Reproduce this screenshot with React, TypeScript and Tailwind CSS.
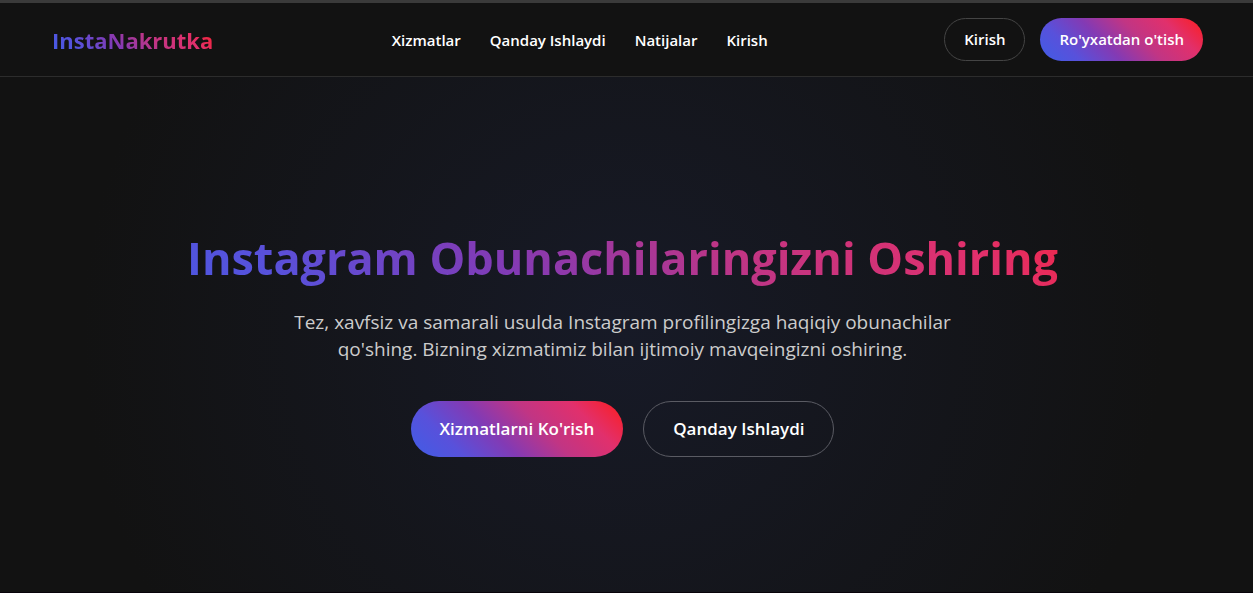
const NAV_LINKS = [
  { label: "Xizmatlar", href: "#xizmatlar" },
  { label: "Qanday Ishlaydi", href: "#qanday-ishlaydi" },
  { label: "Natijalar", href: "#natijalar" },
  { label: "Kirish", href: "#kirish" },
];

const GRADIENT =
  "bg-[linear-gradient(45deg,#405de6,#5851db,#833ab4,#c13584,#e1306c,#fd1d1d)]";

function Header() {
  return (
    <header className="flex items-center justify-between border-t-3 border-b border-t-[#3a3a3a] border-b-[#2c2c2c] bg-[#121212] px-[50px] py-[15px]">
      <a href="#" className={`${GRADIENT} bg-clip-text px-[2px] text-[22px] leading-8 font-bold text-transparent`}>
        InstaNakrutka
      </a>
      <nav className="flex gap-[29px] pt-[2px] text-[15px] font-semibold">
        {NAV_LINKS.map((link) => (
          <a key={link.label} href={link.href}>
            {link.label}
          </a>
        ))}
      </nav>
      <div className="flex gap-[15px] text-[15px] leading-[21px] font-semibold">
        <button type="button" className="rounded-full border border-[#444444] px-[19px] py-[10px]">
          Kirish
        </button>
        <button type="button" className={`${GRADIENT} rounded-full px-[19px] py-[11px]`}>
          Ro'yxatdan o'tish
        </button>
      </div>
    </header>
  );
}

function Hero() {
  return (
    <main className="mr-2 flex grow flex-col items-center justify-center bg-[radial-gradient(circle_at_center,#171a27_0%,#121212_540px)] px-[50px] pt-4 text-center">
      <h1 className={`${GRADIENT} w-full bg-clip-text text-[45px] leading-[58px] font-bold text-transparent`}>
        Instagram Obunachilaringizni Oshiring
      </h1>
      <p className="mt-[22px] max-w-[700px] text-[19px] leading-[27px] text-[#cccccc]">
        Tez, xavfsiz va samarali usulda Instagram profilingizga haqiqiy obunachilar qo'shing. Bizning xizmatimiz bilan ijtimoiy mavqeingizni oshiring.
      </p>
      <div className="mt-[38px] flex gap-5 text-[17px] leading-6 font-semibold">
        <button type="button" className={`${GRADIENT} rounded-full px-[29px] py-4`}>
          Xizmatlarni Ko'rish
        </button>
        <button type="button" className="rounded-full border border-[#5a5b63] px-[29px] py-[15px]">
          Qanday Ishlaydi
        </button>
      </div>
    </main>
  );
}

export default function App() {
  return (
    <div className="flex min-h-screen flex-col border-b border-[#08030a] bg-[#121212] font-['Open_Sans','Noto_Sans',sans-serif] text-white">
      <Header />
      <Hero />
    </div>
  );
}
